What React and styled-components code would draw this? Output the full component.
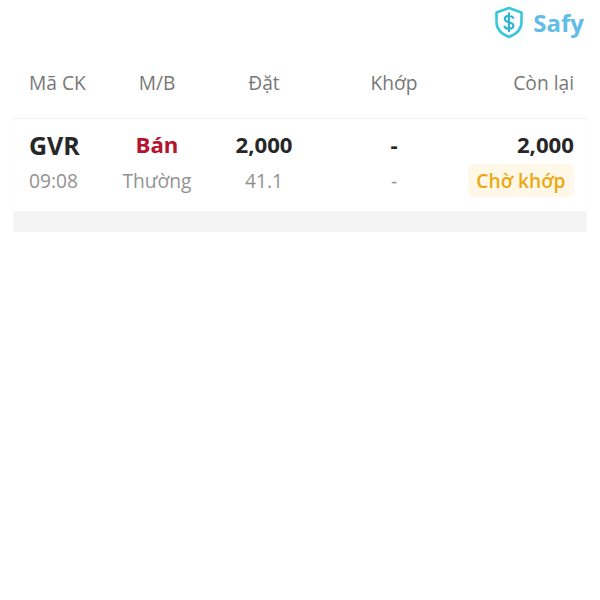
import styled, { createGlobalStyle } from 'styled-components';

const GlobalStyle = createGlobalStyle`
  html, body {
    margin: 0;
    background: #fff;
    font-family: "Open Sans", "Noto Sans", sans-serif;
  }
`;

const Page = styled.div`
  width: 600px;
  height: 600px;
  overflow: hidden;
  background: #fff;
`;

const Brand = styled.div`
  height: 46px;
  padding-right: 16px;
  padding-bottom: 1px;
  box-sizing: border-box;
  display: flex;
  justify-content: flex-end;
  align-items: center;
  gap: 9px;
  color: #62bce8;
  font-size: 24px;
  font-weight: 700;
  line-height: 1;
`;

const Row = styled.div`
  display: grid;
  grid-template-columns: 71px 114px 100px 160px 100px;
  align-items: center;
  padding: 0 13px 0 16px;
`;

const HeadRow = styled(Row)`
  height: 72px;
  margin-left: 13px;
  padding-left: 16px;
  padding-right: 26px;
`;

const HeadCell = styled.div`
  font-size: 19.2px;
  color: #787878;
  white-space: nowrap;
  text-align: ${({ $align }) => $align || 'center'};
`;

const Card = styled.div`
  margin: 0 13px;
  padding-bottom: 14px;
  border-top: 1px solid #f4f4f4;
  box-shadow: 0 0 2px rgba(0, 0, 0, 0.04);
`;

const TopRow = styled(Row)`
  height: 44px;
  padding-top: 8px;
  box-sizing: border-box;
`;

const BottomRow = styled(Row)`
  height: 34px;
`;

const Strong = styled.div`
  font-size: ${({ $size }) => $size || 22.2}px;
  line-height: 1.2;
  font-weight: 700;
  color: ${({ $color }) => $color || '#272727'};
  white-space: nowrap;
  text-align: ${({ $align }) => $align || 'center'};
`;

const Muted = styled.div`
  font-size: 19.2px;
  color: #929292;
  white-space: nowrap;
  text-align: ${({ $align }) => $align || 'center'};
`;

const StatusCell = styled.div`
  display: flex;
  justify-content: flex-end;
  white-space: nowrap;
`;

const Status = styled.span`
  height: 33px;
  padding: 0 8.5px;
  display: flex;
  align-items: center;
  border-radius: 6px;
  background: #fff7e8;
  color: #eba90f;
  font-size: 19.2px;
  font-weight: 600;
`;

const Band = styled.div`
  height: 21px;
  margin: 0 13px;
  background: #f4f4f4;
`;

const ShieldLogo = () => (
  <svg width="30" height="33" viewBox="0 0 30 33" fill="none">
    <path
      d="M15 2 L27.5 6.5 V16 C27.5 23.5 21.5 28.5 15 31 C8.5 28.5 2.5 23.5 2.5 16 V6.5 Z"
      stroke="#38c8de"
      strokeWidth="2.6"
      strokeLinejoin="round"
    />
    <path
      d="M19.2 11.8 C18.4 10.4 17 9.8 15 9.8 C12.4 9.8 10.8 11 10.8 13 C10.8 17.2 19.4 15.2 19.4 19.6 C19.4 21.6 17.6 22.8 15 22.8 C13 22.8 11.4 22 10.6 20.6 M15 7.4 V25.2"
      stroke="#2fb4cf"
      strokeWidth="2.2"
      strokeLinecap="round"
    />
  </svg>
);

export default function App() {
  return (
    <Page>
      <GlobalStyle />
      <Brand>
        <ShieldLogo />
        <span>Safy</span>
      </Brand>
      <HeadRow>
        <HeadCell $align="left">Mã CK</HeadCell>
        <HeadCell>M/B</HeadCell>
        <HeadCell>Đặt</HeadCell>
        <HeadCell>Khớp</HeadCell>
        <HeadCell $align="right">Còn lại</HeadCell>
      </HeadRow>
      <Card>
        <TopRow>
          <Strong $align="left" $size={25}>GVR</Strong>
          <Strong $color="#b5132f">Bán</Strong>
          <Strong>2,000</Strong>
          <Strong>-</Strong>
          <Strong $align="right">2,000</Strong>
        </TopRow>
        <BottomRow>
          <Muted $align="left">09:08</Muted>
          <Muted>Thường</Muted>
          <Muted>41.1</Muted>
          <Muted>-</Muted>
          <StatusCell>
            <Status>Chờ khớp</Status>
          </StatusCell>
        </BottomRow>
      </Card>
      <Band />
    </Page>
  );
}
